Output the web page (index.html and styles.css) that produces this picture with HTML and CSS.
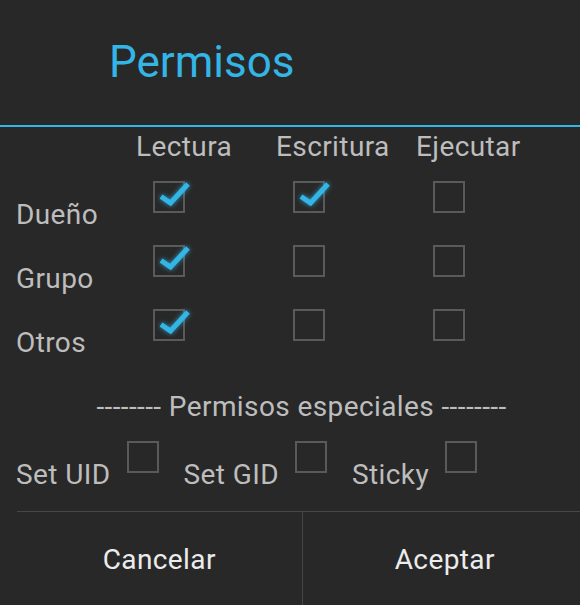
FILE: index.html
```html
<!DOCTYPE html>
<html lang="es">
<head>
<meta charset="utf-8">
<title>Permisos</title>
<link rel="stylesheet" href="styles.css">
</head>
<body>
<div class="dialog">
  <div class="title">Permisos</div>
  <div class="perm">
    <div class="corner"></div>
    <div class="col-h">Lectura</div>
    <div class="col-h">Escritura</div>
    <div class="col-h">Ejecutar</div>

    <div class="row-l">Dueño</div>
    <div class="cell"><span class="cb on"><svg class="tick" viewBox="0 0 32 32"><polyline points="8,15.5 17.5,22 35,3"/></svg></span></div>
    <div class="cell"><span class="cb on"><svg class="tick" viewBox="0 0 32 32"><polyline points="8,15.5 17.5,22 35,3"/></svg></span></div>
    <div class="cell"><span class="cb"></span></div>

    <div class="row-l">Grupo</div>
    <div class="cell"><span class="cb on"><svg class="tick" viewBox="0 0 32 32"><polyline points="8,15.5 17.5,22 35,3"/></svg></span></div>
    <div class="cell"><span class="cb"></span></div>
    <div class="cell"><span class="cb"></span></div>

    <div class="row-l">Otros</div>
    <div class="cell"><span class="cb on"><svg class="tick" viewBox="0 0 32 32"><polyline points="8,15.5 17.5,22 35,3"/></svg></span></div>
    <div class="cell"><span class="cb"></span></div>
    <div class="cell"><span class="cb"></span></div>
  </div>
  <div class="special-title">-------- Permisos especiales --------</div>
  <div class="special">
    <div class="sp-item"><span class="sp-label">Set UID</span><span class="cb"></span></div>
    <div class="sp-item"><span class="sp-label">Set GID</span><span class="cb"></span></div>
    <div class="sp-item"><span class="sp-label">Sticky</span><span class="cb"></span></div>
  </div>
  <div class="buttons">
    <button class="btn">Cancelar</button>
    <button class="btn">Aceptar</button>
  </div>
</div>
</body>
</html>
```

FILE: styles.css
```css
html, body {
  margin: 0;
  background: #282828;
  overflow: hidden;
}

body {
  font-family: Roboto, "Noto Sans", sans-serif;
}

.dialog {
  width: 603px;
}

.title {
  color: #33b5e5;
  font-size: 44px;
  line-height: 53px;
  padding: 36px 0 36px 109px;
  border-bottom: 2px solid #33b5e5;
}

.perm {
  display: grid;
  grid-template-columns: 120px 140px 140px 140px;
  grid-template-rows: 36px 64px 64px 64px;
  padding-left: 16px;
  color: #bdbdbd;
  font-size: 28px;
  letter-spacing: 0.4px;
  line-height: 32px;
}

.col-h {
  padding-top: 4px;
}

.row-l {
  padding-top: 36px;
}

.cell {
  padding-top: 18px;
  padding-left: 17px;
}

.cb {
  position: relative;
  display: block;
  width: 32px;
  height: 32px;
  box-sizing: border-box;
  border: 2px solid #5a5a5a;
}

.tick {
  position: absolute;
  left: -2px;
  top: -2px;
  width: 32px;
  height: 32px;
  overflow: visible;
  fill: none;
  stroke: #33b5e5;
  stroke-width: 5;
  stroke-linecap: butt;
  stroke-linejoin: miter;
  filter: drop-shadow(0 0 2.5px rgba(51, 181, 229, 0.8));
}

.special-title {
  padding: 36px 16px 0;
  text-align: center;
  color: #bdbdbd;
  font-size: 28px;
  letter-spacing: 0.4px;
  line-height: 32px;
}

.special {
  display: flex;
  gap: 25px;
  padding-left: 16px;
  margin-bottom: 20px;
  color: #bdbdbd;
  font-size: 28px;
  letter-spacing: 0.4px;
  line-height: 32px;
}

.sp-item {
  display: flex;
  align-items: flex-start;
}

.sp-label {
  padding-top: 36px;
}

.sp-item .cb {
  margin-top: 18px;
  margin-left: 16px;
}

.buttons {
  display: flex;
  width: 570px;
  margin-left: 17px;
  border-top: 1px solid #474747;
}

.btn {
  flex: 1;
  background: none;
  border: 0;
  margin: 0;
  color: #ececec;
  font-family: Roboto, "Noto Sans", sans-serif;
  font-size: 28px;
  letter-spacing: 0.4px;
  line-height: 32px;
  padding: 32px 0 30px;
}

.btn + .btn {
  border-left: 1px solid #474747;
}
```
